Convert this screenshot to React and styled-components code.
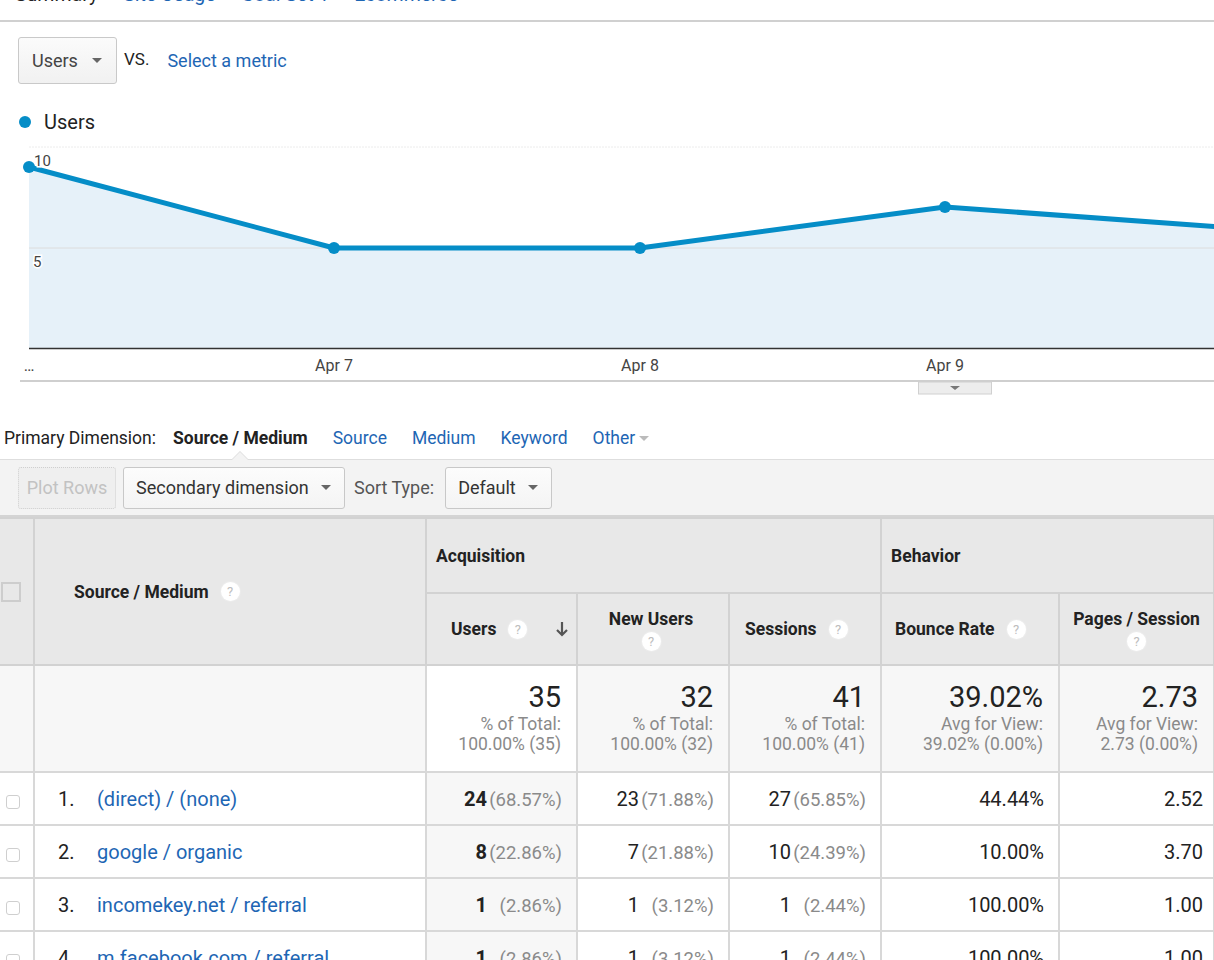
import React from "react";
import styled, { createGlobalStyle } from "styled-components";

const GlobalStyle = createGlobalStyle`
  html, body { margin: 0; padding: 0; background: #fff; }
  body {
    font-family: Roboto, "Liberation Sans", Arial, sans-serif;
    color: #222;
    overflow: hidden;
  }
`;

const Page = styled.div`
  width: 1214px;
  height: 960px;
  overflow: hidden;
`;

const TabBar = styled.div`
  display: flex;
  gap: 25px;
  padding-left: 15px;
  height: 20px;
  overflow: hidden;
  border-bottom: 2px solid #d0d0d0;
`;

const Tab = styled.span`
  font-size: 19.5px;
  line-height: 20px;
  margin-top: -15px;
  white-space: nowrap;
  color: ${(p) => (p.$active ? "#222" : "#1e66b4")};
`;

const MetricRow = styled.div`
  display: flex;
  align-items: flex-start;
  padding: 15px 0 0 18px;
`;

const Select = styled.div`
  box-sizing: border-box;
  display: flex;
  align-items: center;
  justify-content: space-between;
  width: ${(p) => p.$w || 99}px;
  height: ${(p) => p.$h || 47}px;
  padding: 0 14px 0 13px;
  border: 1px solid #c9c9c9;
  border-radius: 3px;
  background: linear-gradient(#fbfbfb, #f1f1f1);
  font-size: 18px;
  color: #444;
`;

const Caret = styled.span`
  flex: none;
  width: 0;
  height: 0;
  border-left: 5px solid transparent;
  border-right: 5px solid transparent;
  border-top: 5px solid ${(p) => p.$color || "#666"};
`;

const Vs = styled.span`
  margin: 12px 0 0 7px;
  font-size: 17px;
  color: #222;
`;

const MetricLink = styled.a`
  margin: 13px 0 0 18px;
  font-size: 18px;
  color: #1e66b4;
  text-decoration: none;
`;

const Legend = styled.div`
  display: flex;
  align-items: center;
  gap: 13px;
  margin: 27px 0 0 19px;
  height: 22px;
  font-size: 20px;
  color: #222;
`;

const Dot = styled.span`
  width: 12px;
  height: 12px;
  border-radius: 50%;
  background: #058dc7;
`;

const ChartSvg = styled.svg`
  display: block;
  margin-top: 7px;
`;

const DimRow = styled.div`
  display: flex;
  align-items: center;
  gap: 25px;
  padding: 30px 0 9px 4px;
  font-size: 17.5px;
  line-height: 24px;
`;

const DimLabel = styled.span`
  color: #222;
  margin-right: -8px;
`;

const ActiveDim = styled.span`
  position: relative;
  font-weight: 700;
  color: #222;
  &::before,
  &::after {
    content: "";
    position: absolute;
    left: 50%;
    width: 0;
    height: 0;
    border-left: 9px solid transparent;
    border-right: 9px solid transparent;
    border-bottom: 9px solid #dcdcdc;
    transform: translateX(-50%);
    bottom: -10px;
  }
  &::after {
    border-left-width: 8px;
    border-right-width: 8px;
    border-bottom: 8px solid #f3f3f3;
    bottom: -10px;
  }
`;

const DimLink = styled.a`
  display: flex;
  align-items: center;
  gap: 4px;
  color: #1e66b4;
  text-decoration: none;
`;

const Toolbar = styled.div`
  display: flex;
  align-items: center;
  gap: 7px;
  height: 55px;
  padding-left: 18px;
  background: #f3f3f3;
  border-top: 1px solid #dedede;
  border-bottom: 2px solid #d4d4d4;
`;

const ToolButton = styled.div`
  box-sizing: border-box;
  display: flex;
  align-items: center;
  justify-content: ${(p) => (p.$disabled ? "center" : "space-between")};
  height: 42px;
  padding: ${(p) => (p.$disabled ? "0 4px" : "0 13px 0 12px")};
  border: 1px ${(p) => (p.$disabled ? "dotted #cfcfcf" : "solid #c8c8c8")};
  border-radius: 3px;
  background: ${(p) => (p.$disabled ? "#efefef" : "linear-gradient(#fcfcfc, #f4f4f4)")};
  font-size: 18px;
  white-space: nowrap;
  color: ${(p) => (p.$disabled ? "#c2c2c2" : "#333")};
  width: ${(p) => p.$w}px;
`;

const ToolLabel = styled.span`
  font-size: 18px;
  color: #555;
  margin: 0 4px 0 2px;
`;

const Table = styled.table`
  width: 1214px;
  border-collapse: collapse;
  table-layout: fixed;
`;

const Th = styled.th`
  background: #e8e8e8;
  border: 2px solid #d2d2d2;
  border-left: ${(p) => (p.$first ? "none" : "2px solid #d2d2d2")};
  font-size: 17.5px;
  font-weight: 700;
  color: #222;
  text-align: left;
  padding: ${(p) => p.$pad || "0 9px"};
  vertical-align: middle;
  line-height: 24px;
  white-space: nowrap;
`;

const HeadInner = styled.div`
  display: flex;
  align-items: center;
  justify-content: ${(p) => (p.$stack ? "center" : "flex-start")};
  flex-direction: ${(p) => (p.$stack ? "column" : "row")};
  gap: ${(p) => (p.$stack ? 1 : 12)}px;
`;

const Help = styled.span`
  display: inline-flex;
  align-items: center;
  justify-content: center;
  width: 19px;
  height: 19px;
  border-radius: 50%;
  background: #fff;
  box-shadow: 0 0 0 1px #ececec;
  font-size: 13px;
  font-weight: 400;
  color: #bdbdbd;
  line-height: 1;
`;

const CheckBox = styled.span`
  display: block;
  box-sizing: border-box;
  width: ${(p) => (p.$small ? 14 : 20)}px;
  height: ${(p) => (p.$small ? 14 : 20)}px;
  margin: ${(p) => (p.$small ? "7px 0 0 6px" : "0 0 0 1px")};
  border: ${(p) => (p.$small ? "1px solid #cfcfcf" : "2px solid #cdcdcd")};
  border-radius: ${(p) => (p.$small ? 3 : 0)}px;
  background: ${(p) => (p.$small ? "#fff" : "transparent")};
`;

const Td = styled.td`
  background: ${(p) => (p.$shade ? "#f7f7f7" : "#fff")};
  border: 2px solid #d8d8d8;
  border-left: ${(p) => (p.$first ? "none" : "2px solid #d4d4d4")};
  padding: ${(p) => p.$pad || "0 14px 0 8px"};
  text-align: ${(p) => p.$align || "right"};
  vertical-align: middle;
  font-size: 20px;
  color: #222;
  white-space: nowrap;
`;

const BigNum = styled.div`
  font-size: 29px;
  line-height: 34px;
  color: #222;
`;

const SubNote = styled.div`
  font-size: 17.5px;
  line-height: 20px;
  color: #8a8a8a;
`;

const Index = styled.span`
  display: inline-block;
  width: 39px;
`;

const RowLink = styled.a`
  color: #1e66b4;
  text-decoration: none;
`;

const Num = styled.span`
  font-weight: ${(p) => (p.$bold ? 700 : 400)};
`;

const Pct = styled.span`
  display: inline-block;
  min-width: 75px;
  text-align: right;
  font-size: 18.5px;
  color: #8a8a8a;
`;

const points = [
  [29, 27],
  [334, 108],
  [640, 108],
  [945, 67],
  [1250, 89],
];

function Chart() {
  const line = points.map((p) => p.join(",")).join(" ");
  const area = `29,208 ${line} 1250,208`;
  return (
    <ChartSvg width="1214" height="256" viewBox="0 0 1214 256">
      <line x1="29" y1="7" x2="1214" y2="7" stroke="#ececec" strokeWidth="1" strokeDasharray="2 1" />
      <polygon points={area} fill="#e6f1f9" />
      <line x1="29" y1="108" x2="1214" y2="108" stroke="#dcdcdc" strokeWidth="1" />
      <line x1="29" y1="208.5" x2="1214" y2="208.5" stroke="#333" strokeWidth="1.5" />
      <polyline points={line} fill="none" stroke="#058dc7" strokeWidth="5" strokeLinejoin="round" />
      {points.slice(0, 4).map(([x, y]) => (
        <circle key={x} cx={x} cy={y} r="6" fill="#058dc7" />
      ))}
      <text x="34" y="26" fontSize="15" fill="#444" fontFamily="Roboto, sans-serif" stroke="#fff" strokeWidth="3" paintOrder="stroke">10</text>
      <text x="33" y="127" fontSize="15" fill="#444" fontFamily="Roboto, sans-serif" stroke="#fff" strokeWidth="3" paintOrder="stroke">5</text>
      <g fontSize="16" fill="#444" fontFamily="Roboto, sans-serif" textAnchor="middle">
        <text x="29" y="231">…</text>
        <text x="334" y="231">Apr 7</text>
        <text x="640" y="231">Apr 8</text>
        <text x="945" y="231">Apr 9</text>
      </g>
      <line x1="20" y1="241" x2="1214" y2="241" stroke="#cfcfcf" strokeWidth="2" />
      <rect x="918.5" y="242" width="73" height="12" fill="#ededed" stroke="#d0d0d0" />
      <polygon points="950,246 960,246 955,250" fill="#777" />
    </ChartSvg>
  );
}

function SortArrow() {
  return (
    <svg width="14" height="16" viewBox="0 0 14 16">
      <path d="M7 1v13M2 9l5 5 5-5" fill="none" stroke="#555" strokeWidth="2.2" />
    </svg>
  );
}

const rows = [
  { src: "(direct) / (none)", users: ["24", "68.57%"], nu: ["23", "71.88%"], ses: ["27", "65.85%"], br: "44.44%", ps: "2.52" },
  { src: "google / organic", users: ["8", "22.86%"], nu: ["7", "21.88%"], ses: ["10", "24.39%"], br: "10.00%", ps: "3.70" },
  { src: "incomekey.net / referral", users: ["1", "2.86%"], nu: ["1", "3.12%"], ses: ["1", "2.44%"], br: "100.00%", ps: "1.00" },
  { src: "m.facebook.com / referral", users: ["1", "2.86%"], nu: ["1", "3.12%"], ses: ["1", "2.44%"], br: "100.00%", ps: "1.00" },
];

const totals = [
  { big: "35", a: "% of Total:", b: "100.00% (35)" },
  { big: "32", a: "% of Total:", b: "100.00% (32)" },
  { big: "41", a: "% of Total:", b: "100.00% (41)" },
  { big: "39.02%", a: "Avg for View:", b: "39.02% (0.00%)" },
  { big: "2.73", a: "Avg for View:", b: "2.73 (0.00%)" },
];

export default function App() {
  return (
    <Page>
      <GlobalStyle />
      <TabBar>
        <Tab $active>Summary</Tab>
        <Tab>Site Usage</Tab>
        <Tab>Goal Set 1</Tab>
        <Tab>Ecommerce</Tab>
      </TabBar>

      <MetricRow>
        <Select>
          Users <Caret />
        </Select>
        <Vs>VS.</Vs>
        <MetricLink>Select a metric</MetricLink>
      </MetricRow>

      <Legend>
        <Dot />
        Users
      </Legend>

      <Chart />

      <DimRow>
        <DimLabel>Primary Dimension:</DimLabel>
        <ActiveDim>Source / Medium</ActiveDim>
        <DimLink>Source</DimLink>
        <DimLink>Medium</DimLink>
        <DimLink>Keyword</DimLink>
        <DimLink>
          Other <Caret $color="#bbb" />
        </DimLink>
      </DimRow>

      <Toolbar>
        <ToolButton $disabled $w={98}>Plot Rows</ToolButton>
        <ToolButton $w={222}>
          Secondary dimension <Caret />
        </ToolButton>
        <ToolLabel>Sort Type:</ToolLabel>
        <ToolButton $w={107}>
          Default <Caret />
        </ToolButton>
      </Toolbar>

      <Table>
        <colgroup>
          <col style={{ width: 34 }} />
          <col style={{ width: 392 }} />
          <col style={{ width: 151 }} />
          <col style={{ width: 152 }} />
          <col style={{ width: 152 }} />
          <col style={{ width: 178 }} />
          <col style={{ width: 155 }} />
        </colgroup>
        <thead>
          <tr style={{ height: 75 }}>
            <Th rowSpan={2} $first $pad="0">
              <CheckBox />
            </Th>
            <Th rowSpan={2} $pad="0 0 0 39px">
              <HeadInner>
                Source / Medium <Help>?</Help>
              </HeadInner>
            </Th>
            <Th colSpan={3}>Acquisition</Th>
            <Th colSpan={2}>Behavior</Th>
          </tr>
          <tr style={{ height: 72 }}>
            <Th $pad="0 6px 0 24px">
              <HeadInner>
                Users <Help>?</Help>
                <span style={{ marginLeft: 16, display: "flex" }}>
                  <SortArrow />
                </span>
              </HeadInner>
            </Th>
            <Th $pad="0 8px 0 4px">
              <HeadInner $stack>
                New Users <Help>?</Help>
              </HeadInner>
            </Th>
            <Th $pad="0 6px 0 15px">
              <HeadInner>
                Sessions <Help>?</Help>
              </HeadInner>
            </Th>
            <Th $pad="0 6px 0 13px">
              <HeadInner>
                Bounce Rate <Help>?</Help>
              </HeadInner>
            </Th>
            <Th $pad="0 4px">
              <HeadInner $stack>
                Pages / Session <Help>?</Help>
              </HeadInner>
            </Th>
          </tr>
        </thead>
        <tbody>
          <tr style={{ height: 107 }}>
            <Td $first $shade />
            <Td $shade />
            {totals.map((t, i) => (
              <Td key={t.big} $shade={i !== 0} $pad="2px 15px 6px 4px">
                <BigNum>{t.big}</BigNum>
                <SubNote>{t.a}</SubNote>
                <SubNote>{t.b}</SubNote>
              </Td>
            ))}
          </tr>
          {rows.map((r, i) => (
            <tr key={r.src} style={{ height: 53 }}>
              <Td $first $pad="0" $align="left">
                <CheckBox $small />
              </Td>
              <Td $pad="0 0 0 23px" $align="left">
                <Index>{i + 1}.</Index>
                <RowLink>{r.src}</RowLink>
              </Td>
              <Td $shade>
                <Num $bold>{r.users[0]}</Num>
                <Pct>({r.users[1]})</Pct>
              </Td>
              <Td>
                <Num>{r.nu[0]}</Num>
                <Pct>({r.nu[1]})</Pct>
              </Td>
              <Td>
                <Num>{r.ses[0]}</Num>
                <Pct>({r.ses[1]})</Pct>
              </Td>
              <Td>{r.br}</Td>
              <Td $pad="0 10px 0 8px">{r.ps}</Td>
            </tr>
          ))}
        </tbody>
      </Table>
    </Page>
  );
}
